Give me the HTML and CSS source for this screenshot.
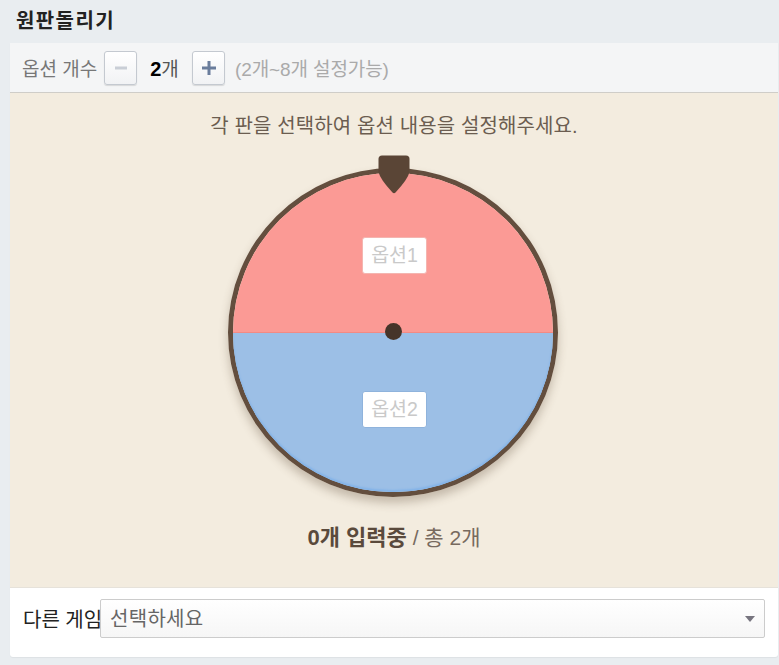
FILE: index.html
```html
<!DOCTYPE html>
<html lang="ko">
<head>
  <meta charset="utf-8">
  <link rel="stylesheet" href="styles.css">
</head>
<body>
  <h1 class="page-title">원판돌리기</h1>

  <div class="card">
    <div class="option-bar">
      <span class="option-label">옵션 개수</span>
      <button class="count-btn minus">
        <svg width="14" height="14" viewBox="0 0 14 14"><rect x="1" y="5.500" width="12" height="3" fill="#c9ced6"/></svg>
      </button>
      <span class="count"><b>2</b>개</span>
      <button class="count-btn plus">
        <svg width="14" height="14" viewBox="0 0 14 14"><path d="M5.500 0h3v5.500H14v3H8.500V14h-3V8.500H0v-3h5.500z" fill="#6a7d9c"/></svg>
      </button>
      <span class="option-hint">(2개~8개 설정가능)</span>
    </div>

    <div class="stage">
      <p class="guide">각 판을 선택하여 옵션 내용을 설정해주세요.</p>

      <div class="wheel">
        <div class="slice slice-red"></div>
        <div class="slice slice-blue"></div>
        <div class="slice-label label-top">옵션1</div>
        <div class="slice-label label-bottom">옵션2</div>
        <div class="hub"></div>
        <svg class="pin" width="32" height="39" viewBox="0 0 32 39">
          <path d="M4 0.500H28Q31.500 0.500 31.500 4V17Q30 24 17.500 37.500Q16 39 14.500 37.500Q2 24 0.500 17V4Q0.500 0.500 4 0.500Z" fill="#5a4536"/>
        </svg>
      </div>

      <p class="progress"><b>0개 입력중</b> / 총 2개</p>
    </div>

    <div class="other-game">
      <label class="other-label">다른 게임</label>
      <div class="fake-select">
        <span>선택하세요</span>
        <i class="caret"></i>
      </div>
    </div>
  </div>
</body>
</html>
```

FILE: styles.css
```css
* {
  box-sizing: border-box;
}

body {
  margin: 0;
  height: 665px;
  overflow: hidden;
  background: #e9edf0;
  font-family: "Liberation Sans", "Noto Sans CJK KR", sans-serif;
}

.page-title {
  margin: 0;
  height: 43px;
  padding: 10px 0 0 16px;
  font-size: 20px;
  line-height: 22px;
  letter-spacing: 1.400px;
  font-weight: 700;
  color: #222;
}

.card {
  margin: 0 1px 0 10px;
  background: #fff;
  border-radius: 0 0 3px 3px;
  box-shadow: 0 1px 1px rgba(0, 0, 0, 0.05);
}

.option-bar {
  display: flex;
  align-items: center;
  height: 50px;
  padding-left: 12px;
  background: #f4f5f6;
  border-bottom: 1px solid #cfcdc8;
  font-size: 19px;
  color: #777;
}

.option-label {
  width: 82px;
  white-space: nowrap;
}

.count-btn {
  display: flex;
  align-items: center;
  justify-content: center;
  width: 33px;
  height: 34px;
  padding: 0;
  background: linear-gradient(#fff, #f1f2f4);
  border: 1px solid #c4c9d0;
  border-radius: 3px;
  box-shadow: 0 1px 1px rgba(0, 0, 0, 0.12);
}

.count {
  width: 55px;
  text-align: center;
  color: #555;
}

.count b {
  font-size: 20px;
  color: #000;
}

.option-hint {
  margin-left: 10px;
  letter-spacing: -0.100px;
  color: #aaa;
}

.stage {
  height: 495px;
  padding-top: 20px;
  background: #f3ecdf;
  border-bottom: 1px solid #e6e2da;
  text-align: center;
}

.guide {
  margin: 0;
  font-size: 20px;
  line-height: 26px;
  letter-spacing: 0.120px;
  color: #6b5d50;
}

.wheel {
  position: relative;
  width: 330px;
  height: 329px;
  margin: 29px 0 0 218px;
  border: 5px solid #634e3e;
  border-radius: 50%;
  box-shadow: 0 6px 10px rgba(90, 70, 50, 0.3);
}

.wheel .slice {
  height: 50%;
}

.slice-red {
  background: #fb9a95;
  border-radius: 160px 160px 0 0;
  border-bottom: 1px solid #f28a84;
}

.slice-blue {
  background: #9cbfe6;
  border-radius: 0 0 160px 160px;
  box-shadow: inset 0 -2px 2px #83b3e8;
}

.slice-label {
  position: absolute;
  left: 129px;
  width: 65px;
  height: 37px;
  background: #fff;
  border-radius: 3px;
  font-size: 19.500px;
  line-height: 35px;
  color: #c9c9c9;
}

.label-top {
  top: 64px;
  border: 1px solid #f4b5b0;
}

.label-bottom {
  top: 218px;
  border: 1px solid #8fb3dc;
}

.hub {
  position: absolute;
  top: 150px;
  left: 152px;
  width: 17px;
  height: 17px;
  background: #46342a;
  border-radius: 50%;
}

.pin {
  position: absolute;
  top: -18px;
  left: 145px;
}

.progress {
  margin: 28px 0 0;
  font-size: 21px;
  line-height: 26px;
  color: #776a5e;
}

.progress b {
  font-size: 22px;
  color: #5a4a3c;
}

.other-game {
  display: flex;
  align-items: center;
  height: 69px;
  padding: 0 13px 8px 13px;
  font-size: 20px;
  color: #222;
}

.other-label {
  width: 77px;
  white-space: nowrap;
}

.fake-select {
  flex: 1;
  display: flex;
  align-items: center;
  justify-content: space-between;
  height: 39px;
  padding: 0 9px 3px;
  background: linear-gradient(#fff, #f6f6f6);
  border: 1px solid #ccc;
  border-radius: 2px;
  letter-spacing: 0.300px;
  color: #666;
}

.caret {
  width: 0;
  height: 0;
  margin-top: 3px;
  border-top: 6px solid #77757f;
  border-left: 5.500px solid transparent;
  border-right: 5.500px solid transparent;
}
```
